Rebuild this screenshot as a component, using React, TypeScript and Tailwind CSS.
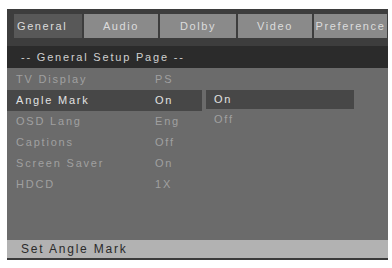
import React from "react";

const tabs = [
  { name: "General", w: "w-[68px]", active: true },
  { name: "Audio", w: "w-[74px]" },
  { name: "Dolby", w: "w-[76px]" },
  { name: "Video", w: "w-[74px]" },
  { name: "Preference", w: "w-[73px]" },
];

const rows = [
  { label: "TV Display", value: "PS" },
  { label: "Angle Mark", value: "On", active: true },
  { label: "OSD Lang", value: "Eng" },
  { label: "Captions", value: "Off" },
  { label: "Screen Saver", value: "On" },
  { label: "HDCD", value: "1X" },
];

export default function App() {
  return (
    <div
      className="w-[392px] h-[268px] bg-white pt-[9px] pl-[7px] overflow-hidden"
      style={{ fontFamily: '"Liberation Sans", Arial, sans-serif' }}
    >
      <div className="w-[381px] h-[251px] bg-[#6b6b6b] flex flex-col border-b-[2px] border-[#3a3a3a]">
        <div className="bg-[#3d3d3d] pl-[7px] pt-[5px] pb-[8px] flex gap-[2px]">
          {tabs.map((t) => (
            <div
              key={t.name}
              className={`${t.w} h-[24px] flex items-center ${t.active ? "justify-start pl-[3px]" : "justify-center"} text-[11px] tracking-[1.6px] text-[#dcdcdc] whitespace-nowrap overflow-visible ${
                t.active ? "bg-[#585858]" : "bg-[#8a8a8a]"
              }`}
            >
              {t.name}
            </div>
          ))}
        </div>
        <div className="h-[22px] bg-[#2b2b2b] flex items-center pl-[14px] text-[11px] tracking-[1.8px] text-[#d0d0d0]">
          -- General Setup Page --
        </div>
        <div className="flex-1 pt-[1px] relative">
          {rows.map((r) => (
            <div
              key={r.label}
              className={`h-[21px] w-[195px] flex items-center text-[11px] tracking-[1.8px] ${
                r.active ? "bg-[#474747] text-[#e2e2e2]" : "text-[#a0a0a0]"
              }`}
            >
              <span className="pl-[9px] w-[148px]">{r.label}</span>
              <span>{r.value}</span>
            </div>
          ))}
          <div className="absolute left-[199px] top-[22px] w-[148px] flex flex-col">
            <div className="h-[19px] bg-[#474747] flex items-center pl-[8px] text-[11px] tracking-[1.8px] text-[#e2e2e2]">
              On
            </div>
            <div className="h-[21px] flex items-center pl-[8px] text-[11px] tracking-[1.8px] text-[#a0a0a0]">
              Off
            </div>
          </div>
        </div>
        <div className="h-[18px] bg-[#b2b2b2] flex items-center pl-[14px] text-[12px] tracking-[1.8px] text-[#2a2a2a]">
          Set Angle Mark
        </div>
      </div>
    </div>
  );
}
